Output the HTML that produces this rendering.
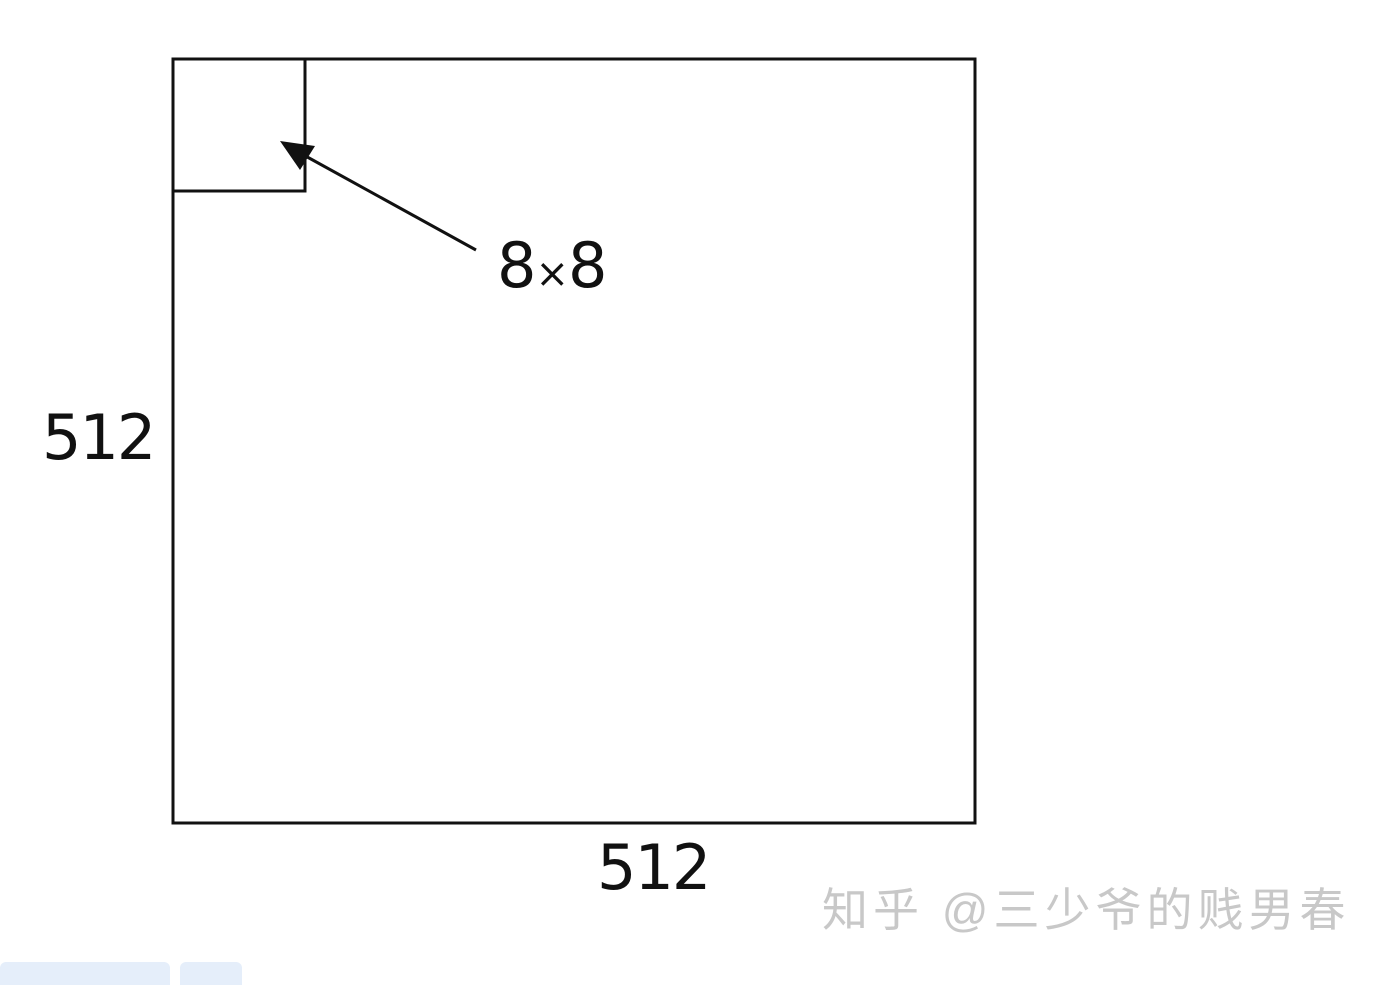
<!DOCTYPE html>
<html><head><meta charset="utf-8"><style>
html,body{margin:0;padding:0;width:1380px;height:985px;background:#fff;overflow:hidden;position:relative;font-family:"Liberation Sans","Noto Sans CJK SC",sans-serif}
.t{position:absolute;color:#111;font-family:"DejaVu Sans","Liberation Sans",sans-serif;font-weight:500}
</style></head><body>
<svg width="1380" height="985" style="position:absolute;left:0;top:0">
<rect x="173" y="59" width="802" height="764" fill="none" stroke="#111" stroke-width="3"/>
<rect x="173" y="59" width="132" height="132" fill="none" stroke="#111" stroke-width="3"/>
<line x1="476" y1="250" x2="300" y2="153" stroke="#111" stroke-width="3"/>
<polygon points="280,141 315,146 300,170" fill="#111"/>
</svg>
<div class="t" style="left:497px;top:228px;font-size:62px;line-height:76px;letter-spacing:-1px">8<span style="font-size:40px">×</span>8</div>
<div class="t" style="left:42px;top:400px;font-size:62px;line-height:76px;letter-spacing:-2px">512</div>
<div class="t" style="left:597px;top:830px;font-size:62px;line-height:76px;letter-spacing:-2px">512</div>
<div style="position:absolute;left:822px;top:880px;font-size:46px;line-height:60px;color:#c8c8c8;letter-spacing:5px">知乎 @三少爷的贱男春</div>
<div style="position:absolute;left:0;top:962px;width:170px;height:30px;background:#e5eefa;border-radius:6px"></div>
<div style="position:absolute;left:180px;top:962px;width:62px;height:30px;background:#e5eefa;border-radius:6px"></div>
</body></html>
